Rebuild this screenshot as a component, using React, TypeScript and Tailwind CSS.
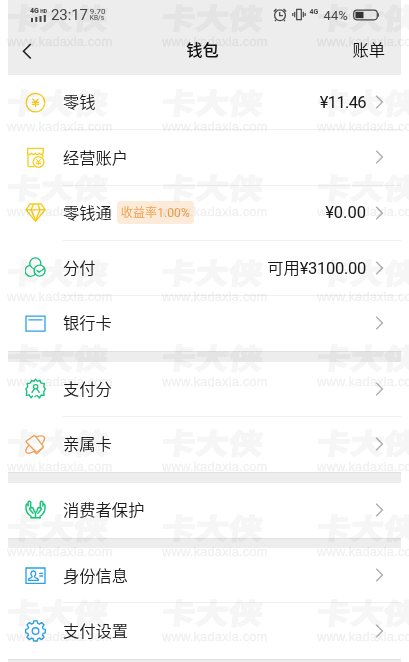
import type { ReactNode } from 'react'

type RowProps = {
    icon: ReactNode
    label: string
    badge?: string
    prefix?: string
    value?: string
    /** letter spacing class of the amount */
    tracking?: string
    last?: boolean
}

/* ── Icons ──────────────────────────────────────────────── */

const svgProps = {
    width: 22,
    height: 22,
    viewBox: '0 0 22 22',
    fill: 'none',
    strokeWidth: 1.35,
    strokeLinecap: 'round' as const,
    strokeLinejoin: 'round' as const,
}

const CoinIcon = () => (
    <svg {...svgProps} stroke="#f8cd1c">
        <circle cx="10.5" cy="10.6" r="9.3" />
        <path d="M7.8 7.1 10.5 10l2.7-2.9M10.5 10v4.6M7.4 10.3h6.2M7.4 12.5h6.2" strokeWidth="1.35" />
    </svg>
)

const ShopIcon = () => (
    <svg {...svgProps} stroke="#f8cd1c">
        <path d="M2.6 1.3h15.6v5c-.6 1.6-3.1 1.6-3.9 0-.8 1.6-3.1 1.6-3.9 0-.8 1.6-3.1 1.6-3.9 0-.8 1.6-3.3 1.6-3.9 0zM3 8v10.4q0 1.2 1.2 1.2h4.6M17.8 8v1.8" />
        <circle cx="13.5" cy="15" r="5.4" />
        <path d="m11.5 12.4 2 2.2 2-2.2M13.5 14.6v3.2M11.3 14.9h4.4M11.3 16.5h4.4" strokeWidth="1" />
    </svg>
)

const DiamondIcon = () => (
    <svg {...svgProps} stroke="#f8cd1c">
        <path d="M5 2h11.2l4 5.8-9.6 11.6L1 7.8zM1 7.8h19.2M6.3 7.8l4.3 11 4.3-11M6.3 7.8l2-5.6M14.9 7.8l-2-5.6" />
    </svg>
)

const CirclesIcon = () => (
    <svg {...svgProps} stroke="#18c47c">
        <path d="M5.4 8.8a5.5 5.5 0 1 1 10.2-.9M5.4 8.4a5.5 5.5 0 1 0 4.9 8.4M5.4 8.8c1 1.9 2.3 2.9 4.2 3.2" />
        <circle cx="14.6" cy="13.6" r="5.5" />
        <path d="m12 13.4 2 1.8 5-3.5" />
    </svg>
)

const CardIcon = () => (
    <svg {...svgProps} stroke="#2ba0e8" strokeLinejoin="miter">
        <path d="M1 3.2h19v15H1zM3.9 6.8h13.2" strokeWidth="1.3" />
    </svg>
)

const ScoreIcon = () => (
    <svg {...svgProps} stroke="#18c47c">
        <path d="m7.5 18-1.3 1.9-2-3.1-2.8.5.4-3.5L.9 11l1.7-2.2-.5-3.5 3.1-.2 1.6-2.7 2.2 1 1.6-2.2 1.7 2.2 2.5-1 1.4 2.7 3.1.2-.5 3.5L20.3 11l-1.6 2.8.4 3.5-2.7-.3-2.1 3-1.8-2.2" />
        <circle cx="10.6" cy="8.7" r="2.1" />
        <path d="M7 14.4c.7-1.3 1.5-2.3 2.6-3.8M14.2 14.4c-.7-1.3-1.5-2.3-2.6-3.8M9.8 18.7l1.5-1" />
    </svg>
)

const FamilyIcon = () => (
    <svg {...svgProps} stroke="#f2a45c">
        <path d="m1.7 6.7 7-4.8q1-.6 1.7.3l7.5 9.6q.6.9-.2 1.6l-5.3 4.5q-.9.7-1.6-.2L1.4 8.3q-.6-.9.3-1.6z" />
        <path d="M11 3.1c3.6-1.7 7.7-1.7 8.4.2.6 1.9-.4 4.4-2.6 7.1M3.7 11.4c-2.6 3.1-3.6 5.8-2.3 7 1.4 1.3 4.8.7 8.4-1.4M17.9 12.4v1.7l-6.2 5.6-1.8-1.1" />
    </svg>
)

const HandsIcon = () => (
    <svg {...svgProps} stroke="#18c47c" strokeWidth="1.5">
        <path d="M6 18.8v-1.5C2.8 15.5 1.1 12.8 1 8.9c-.1-2.2.1-3.8.9-3.8 1 0 1.2.7 1.2 1.8V3.5c0-1.8 2.6-1.8 2.6 0v4.3l-1.2 2.5 3.6 4M5.7 9.2C7 8 8.2 8.8 8.5 9.8l.5 2.1 1.5 1.9v5M6 18.8h9" />
        <path d="M15 18.8v-1.5c3.2-1.8 4.9-4.5 5-8.4.1-2.2-.1-3.8-.9-3.8-1 0-1.2.7-1.2 1.8V3.5c0-1.8-2.6-1.8-2.6 0v4.3l1.2 2.5-3.6 4M15.3 9.2C14 8 12.8 8.8 12.5 9.8l-.5 2.1-1.5 1.9" />
    </svg>
)

const IdIcon = () => (
    <svg {...svgProps} stroke="#2ba0e8" strokeLinejoin="miter">
        <path d="M1 3h19v15.4H1zM14.8 8.4h2.8M14.8 11h2.8" />
        <path d="M7.1 11.4C5 9 5.9 6 8.3 6s3.3 3 1.2 5.4c-.2 1.2.5 1.4 2.8 2.1q1 .4 1 1.8H3.5q-.2-1.4.8-1.8c2.3-.7 3-.9 2.8-2.1z" />
    </svg>
)

const GearIcon = () => (
    <svg {...svgProps} stroke="#2ba0e8">
        <path d="M8.8.9h3.4l.5 2.5 1.7.7 2.2-1.5 2.4 2.4-1.5 2.2.7 1.7 2.1.5v3.4l-2.1.5-.7 1.7 1.5 2.2-2.4 2.4-2.2-1.5-1.7.7-.5 2.2H8.8l-.5-2.2-1.7-.7-2.2 1.5L2 17.2 3.5 15l-.7-1.7-2.1-.5V9.4l2.1-.5.7-1.7L2 5l2.4-2.4 2.2 1.5 1.7-.7z" />
        <circle cx="10.5" cy="11" r="3.3" />
    </svg>
)

const Chevron = () => (
    <svg className="ml-[9px] shrink-0" width="9" height="14" viewBox="0 0 9 14" fill="none" stroke="#b0b0b0" strokeWidth="1.5">
        <path d="m1.2.8 6.2 6.2-6.2 6.2" />
    </svg>
)

/* ── Status bar ─────────────────────────────────────────── */

const StatusBar = () => (
    <div className="flex h-[29px] items-center justify-between pr-[22px] pl-[22px] text-[#484848]">
        <div className="flex items-center">
            <div className="flex w-[18px] flex-col items-start">
                <span className="flex h-[7px] w-[17px] justify-between text-[7px] leading-[7px] font-black whitespace-nowrap">
                    4G<span className="text-[5px] leading-[6px]">HD</span>
                </span>
                <svg width="17" height="7" viewBox="0 0 17 7" fill="currentColor">
                    <path d="M1 3h2v4H1zM5.3 2h2v5h-2zM9.5 1h2v6h-2zM13.8 0h2v7h-2z" />
                </svg>
            </div>
            <span className="mt-[2px] ml-[3px] text-[15px] leading-none tracking-[-0.1px]">23:17</span>
            <span className="ml-[2px] flex flex-col pt-px text-[8px] leading-[7.5px]">
                <span>9.70</span>
                <span className="text-[6.5px] leading-[7px]">KB/s</span>
            </span>
        </div>
        <div className="flex items-center">
            <svg className="mr-px" width="14" height="14" viewBox="0 0 13 13" fill="none" stroke="currentColor" strokeWidth="1.2">
                <circle cx="6.5" cy="6.8" r="5" />
                <path d="M6.2 3.7V7h3M.8 3.2 3.2 1M12.2 3.2 9.8 1M2.8 11.2l-1 1M10.2 11.2l1 1" />
            </svg>
            <svg className="ml-[4px]" width="14" height="13" viewBox="0 0 14 13" fill="none" stroke="currentColor" strokeWidth="1.2">
                <path d="M4.7 1.4h4.6v10.2H4.7zM2.7 3.8v5.4M11.3 3.8v5.4M.8 5v3M13.2 5v3" />
            </svg>
            <span className="mb-[4px] ml-[4px] w-[10px] text-[7px] leading-none font-bold">4G</span>
            <span className="mt-px ml-[4px] text-[13px] leading-none tracking-[0.1px]">44%</span>
            <svg className="ml-[5px]" width="26" height="12" viewBox="0 0 26 11" fill="none">
                <rect x=".7" y=".7" width="23.6" height="9.6" rx="3.2" stroke="currentColor" strokeWidth="1.2" />
                <path d="M2.5 2.3h8v6.4h-8z" fill="#333" />
                <path d="M25.4 3.8v3.4" stroke="currentColor" />
            </svg>
        </div>
    </div>
)

const Header = () => (
    <header className="h-[75px] bg-[#ededed]">
        <StatusBar />
        <div className="grid h-[44px] grid-cols-3 items-center pr-[16px] pl-[14px] text-[16.3px] text-[#111]">
            <svg width="10" height="16" viewBox="0 0 10 16" fill="none" stroke="#222" strokeWidth="1.6">
                <path d="M8.8 1 1.5 8.3l7.3 7.2" />
            </svg>
            <span className="pr-[2px] text-center font-medium">钱包</span>
            <span className="pt-px text-right font-[350]">账单</span>
        </div>
    </header>
)

/* ── List ───────────────────────────────────────────────── */

const Row = ({ icon, label, badge, prefix, value, tracking = '', last }: RowProps) => (
    <div className="flex h-[55.25px] pl-[17px]">
        <div className="flex w-[38px] shrink-0 items-center">{icon}</div>
        <div className={`flex flex-1 items-center border-b pr-[17px] ${last ? 'border-transparent' : 'border-[#f0f0f0]'}`}>
            <span className="pt-[3px] text-[16.3px] font-[350] text-[#1c1c1c]">{label}</span>
            {badge && (
                <span className="ml-[5px] flex h-[23px] w-[77px] items-center justify-center rounded-[4px] bg-[#fdebd9] pt-px text-[12px] tracking-[0.1px] whitespace-nowrap text-[#eda250]">
                    {badge}
                </span>
            )}
            <span className="ml-auto flex items-center pt-[2px] text-[16.3px] text-[#191919]">
                {prefix && <span className="font-[350]">{prefix}</span>}
                {value && <span className={`font-['Roboto'] text-[16.5px] ${tracking}`}>{value}</span>}
            </span>
            <Chevron />
        </div>
    </div>
)

const Group = ({ children }: { children: ReactNode }) => <section className="bg-white">{children}</section>

const Gap = () => <div className="h-[10.4px] border-t border-[#e1e1e1] bg-[#ededed]" />

/* ── Repeating watermark laid over the whole page ───────── */

const Watermark = () => (
    <div className="pointer-events-none absolute inset-0 grid auto-rows-[85px] grid-cols-[155px_155px_155px] overflow-hidden pl-[7px] text-[#f6f6f6] mix-blend-multiply">
        {[...Array(24)].map((_, i) => (
            <div key={i} className="pt-[5px]">
                <div className="h-[30px] w-[100px] -skew-x-6 scale-y-[0.85] text-[33.5px] leading-[30px] font-black whitespace-nowrap [-webkit-text-stroke:1px_#f6f6f6]">
                    卡大侠
                </div>
                <div className="font-['Liberation_Sans'] text-[13px] leading-[14px] tracking-[0.1px] text-[#f0f0f0] [-webkit-text-stroke:0.3px_#f0f0f0]">
                    www.kadaxia.com
                </div>
            </div>
        ))}
    </div>
)

export default function App() {
    return (
        <div className="relative h-[662px] w-[409px] overflow-hidden bg-white font-['Roboto','Noto_Sans_CJK_SC',sans-serif]">
            <main className="mx-[8px]">
                <Header />
                <Group>
                    <Row icon={<CoinIcon />} label="零钱" value="¥11.46" tracking="tracking-[-0.65px]" />
                    <Row icon={<ShopIcon />} label="经营账户" />
                    <Row icon={<DiamondIcon />} label="零钱通" badge="收益率1.00%" value="¥0.00" />
                    <Row icon={<CirclesIcon />} label="分付" prefix="可用" value="¥3100.00" tracking="tracking-[-0.3px]" />
                    <Row icon={<CardIcon />} label="银行卡" last />
                </Group>
                <Gap />
                <Group>
                    <Row icon={<ScoreIcon />} label="支付分" />
                    <Row icon={<FamilyIcon />} label="亲属卡" last />
                </Group>
                <Gap />
                <Group>
                    <Row icon={<HandsIcon />} label="消费者保护" last />
                </Group>
                <Gap />
                <Group>
                    <Row icon={<IdIcon />} label="身份信息" />
                    <Row icon={<GearIcon />} label="支付设置" last />
                </Group>
                <Gap />
            </main>
            <Watermark />
        </div>
    )
}
